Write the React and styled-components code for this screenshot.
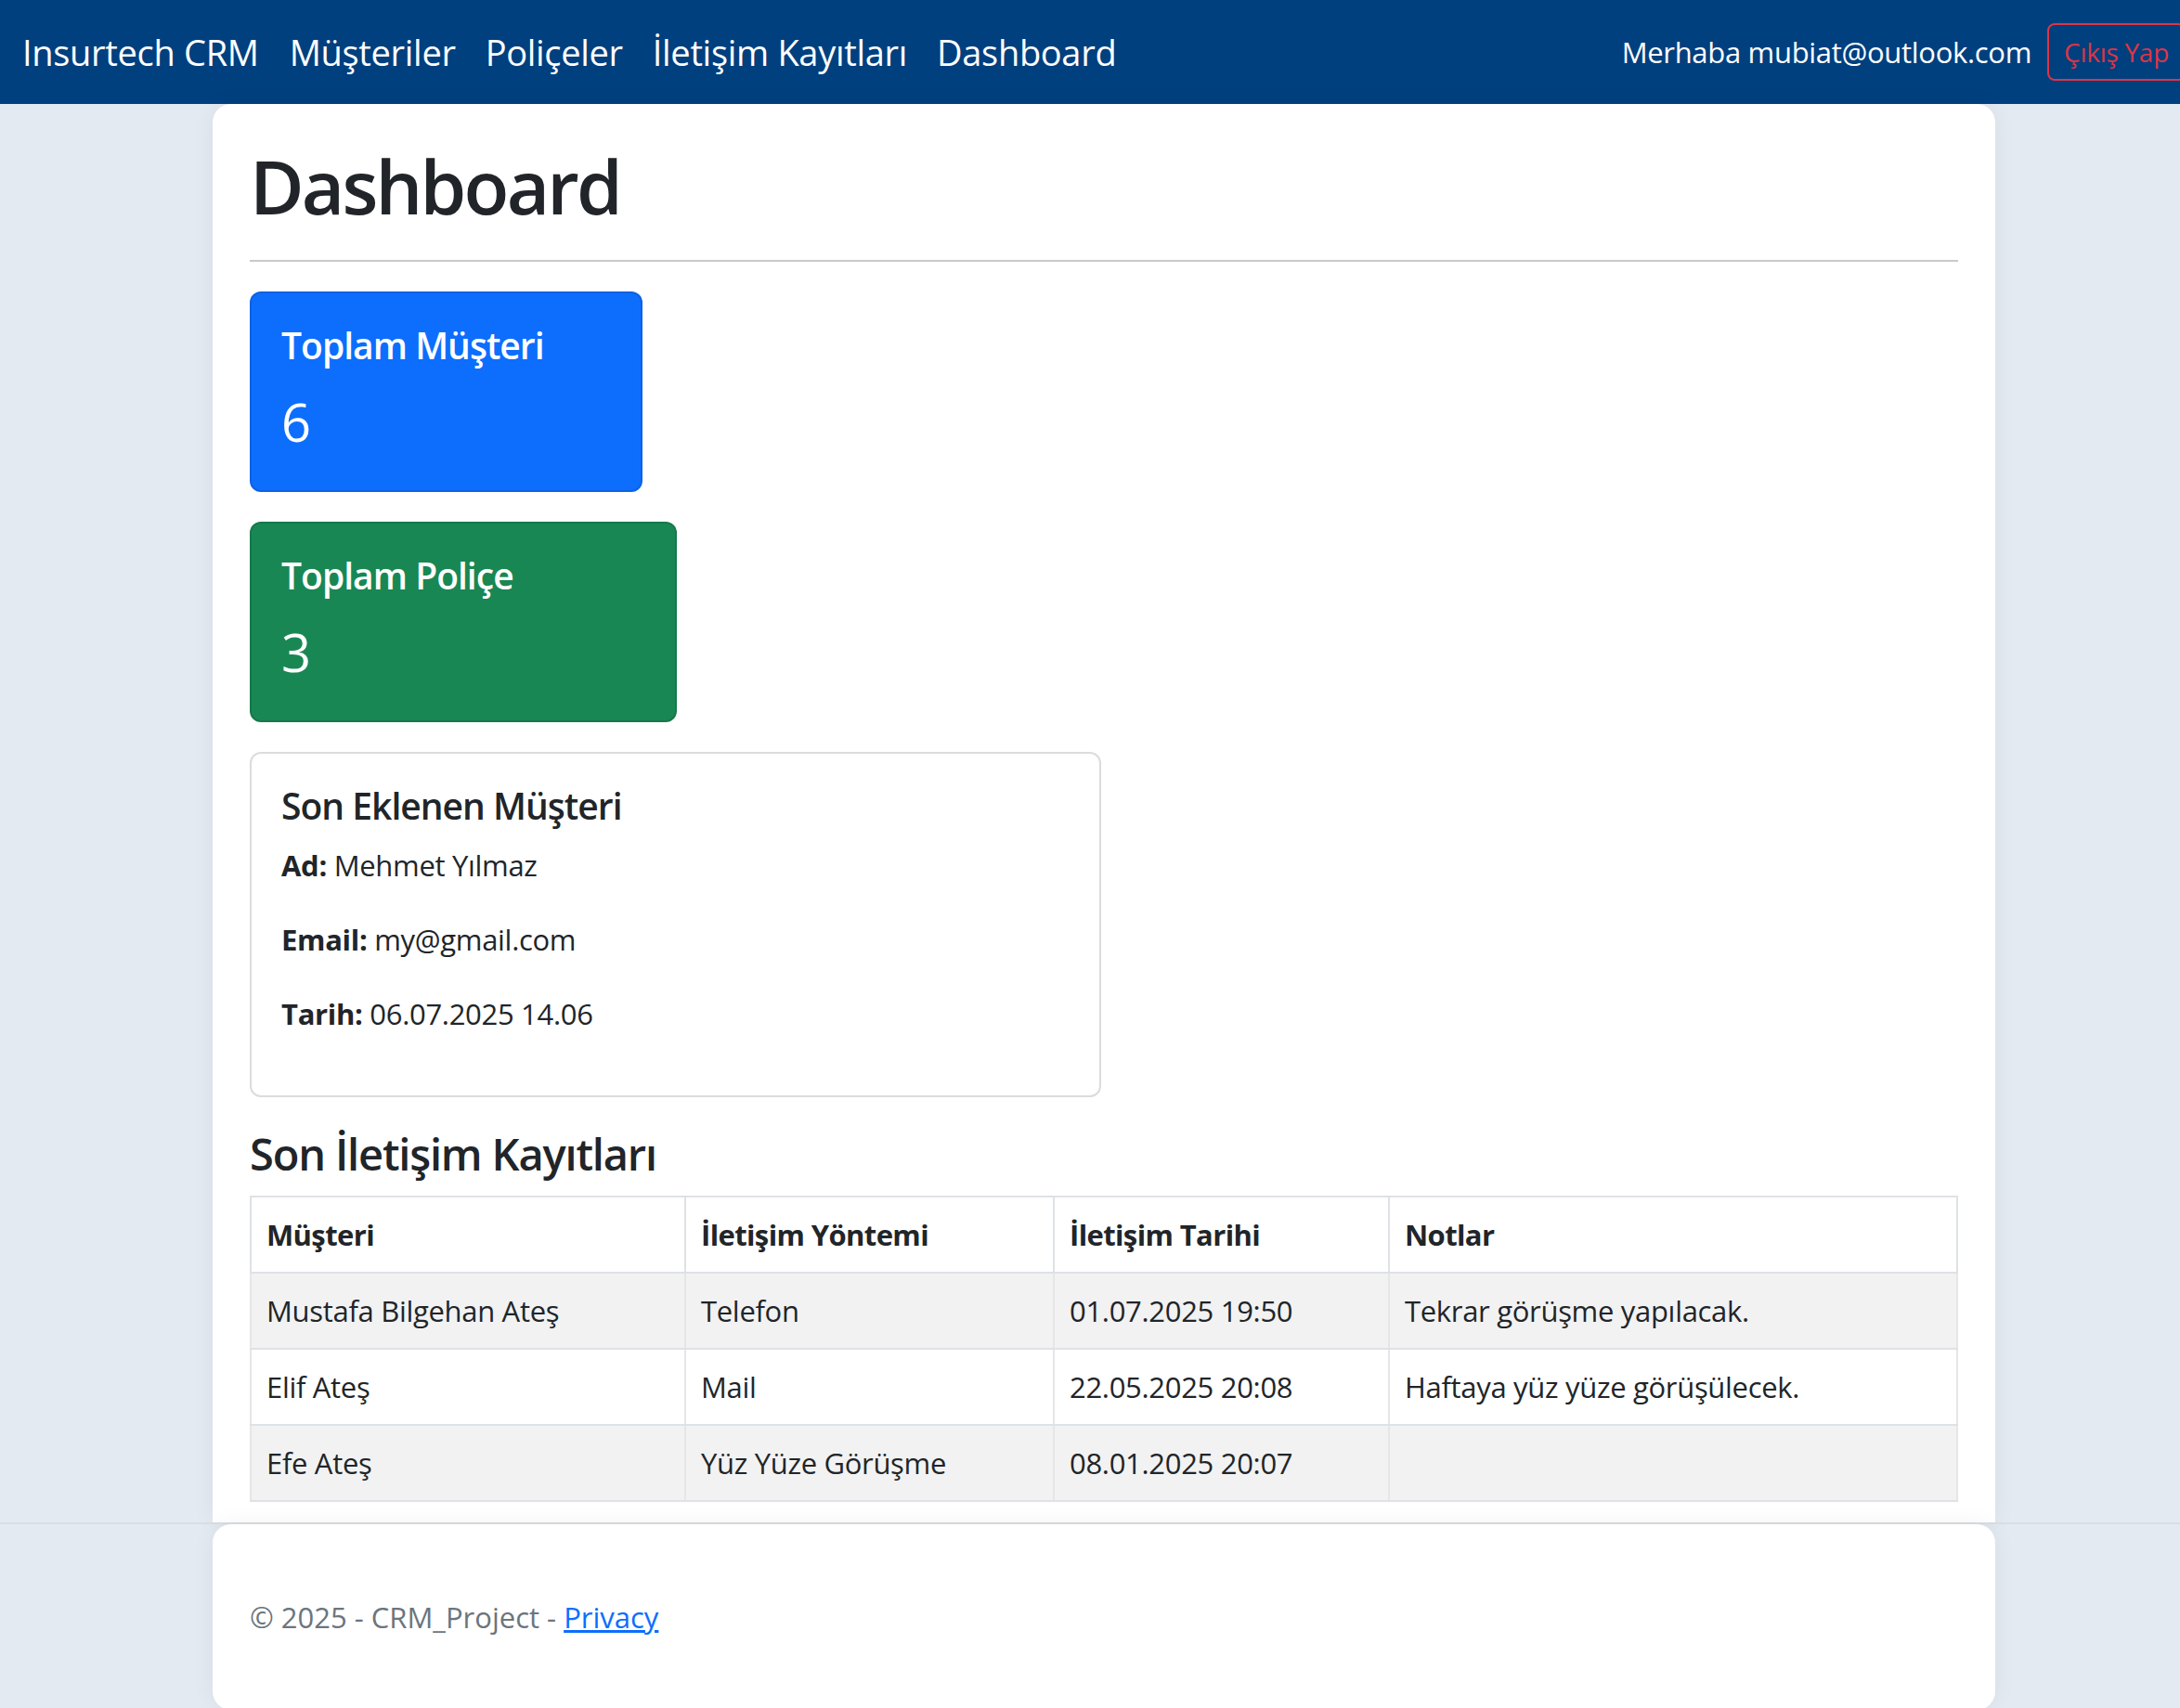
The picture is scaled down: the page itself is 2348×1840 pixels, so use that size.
import React from "react";
import styled, { createGlobalStyle } from "styled-components";

const font = `"Segoe UI", "Open Sans", "Noto Sans", Arial, sans-serif`;

const GlobalStyle = createGlobalStyle`
  html, body {
    margin: 0;
    padding: 0;
    overflow: hidden;
  }
  body {
    background-color: #e4eaf1;
    font-family: ${font};
    font-size: 31px;
    line-height: 48px;
    letter-spacing: -0.01em;
    color: #212529;
  }
  * {
    box-sizing: border-box;
  }
`;

const Navbar = styled.nav`
  display: flex;
  align-items: center;
  justify-content: space-between;
  height: 112px;
  padding-left: 24px;
  background-color: #00407f;
  color: #fff;
`;

const NavLeft = styled.div`
  display: flex;
  align-items: center;
`;

const Brand = styled.a`
  font-size: 38px;
  line-height: 60px;
  margin-right: 17px;
  color: #fff;
  text-decoration: none;
`;

const NavLink = styled.a`
  font-size: 38px;
  line-height: 60px;
  padding: 0 16px;
  color: #fff;
  text-decoration: none;
`;

const NavRight = styled.div`
  display: flex;
  align-items: center;
  gap: 17px;
  margin-right: -6px;
  white-space: nowrap;
`;

const Greeting = styled.span`
  font-size: 31px;
  color: #fff;
`;

const LogoutButton = styled.button`
  font-family: ${font};
  font-size: 28px;
  line-height: 42px;
  letter-spacing: -0.01em;
  padding: 8px 16px;
  color: #dc3545;
  background: transparent;
  border: 2px solid #dc3545;
  border-radius: 8px;
`;

const MainCard = styled.main`
  width: 1920px;
  margin-left: 229px;
  padding: 40px 40px 22px;
  background-color: #fff;
  border-radius: 20px 20px 0 0;
  box-shadow: 0 0 24px rgba(0, 0, 0, 0.06);
`;

const PageTitle = styled.h1`
  margin: 0 0 32px;
  font-size: 80px;
  font-weight: 600;
  line-height: 96px;
  letter-spacing: -0.035em;
`;

const Divider = styled.hr`
  margin: 0 0 32px;
  border: 0;
  height: 2px;
  background-color: #c8c9ca;
`;

const StatCard = styled.div`
  width: ${(p) => p.$width}px;
  margin-bottom: 32px;
  padding: 32px;
  background-color: ${(p) => p.$bg};
  border: 2px solid rgba(0, 0, 0, 0.1);
  border-radius: 12px;
  color: #fff;
`;

const StatTitle = styled.h5`
  margin: 0 0 16px;
  font-size: 39px;
  font-weight: 600;
  line-height: 48px;
  letter-spacing: -0.025em;
`;

const StatValue = styled.p`
  margin: 0;
  font-size: 56px;
  line-height: 84px;
`;

const InfoCard = styled.div`
  width: 917px;
  padding: 32px;
  border: 2px solid #dcdcdc;
  border-radius: 12px;
`;

const InfoTitle = styled.h5`
  margin: 0 0 16px;
  font-size: 39px;
  font-weight: 600;
  line-height: 48px;
  letter-spacing: -0.025em;
`;

const InfoLine = styled.p`
  margin: 0 0 32px;
  strong {
    font-weight: 700;
  }
`;

const SectionTitle = styled.h4`
  margin: 32px 0 16px;
  font-size: 47px;
  font-weight: 600;
  line-height: 58px;
  letter-spacing: -0.025em;
`;

const Table = styled.table`
  width: 100%;
  border-collapse: collapse;
  border: 2px solid #dee2e6;
`;

const Th = styled.th`
  width: ${(p) => (p.$width ? `${p.$width}px` : "auto")};
  padding: 16px;
  text-align: left;
  font-weight: 700;
  letter-spacing: -0.02em;
  border: 2px solid #dee2e6;
`;

const Row = styled.tr`
  background-color: ${(p) => (p.$striped ? "#f2f2f2" : "#fff")};
`;

const Td = styled.td`
  padding: 16px;
  height: 82px;
  border: 2px solid #dee2e6;
  border-left-color: #e6e6e6;
  border-right-color: #e6e6e6;
`;

const Footer = styled.footer`
  border-top: 2px solid #d9dee3;
`;

const FooterCard = styled.div`
  width: 1920px;
  margin-left: 229px;
  padding: 40px;
  background-color: #fff;
  border-radius: 20px;
  box-shadow: 0 0 24px rgba(0, 0, 0, 0.06);
  line-height: 120px;
  letter-spacing: 0;
  white-space: nowrap;
  color: #6c757d;
`;

const FooterLink = styled.a`
  color: #0d6efd;
  text-decoration: underline;
`;

const contacts = [
  { name: "Mustafa Bilgehan Ateş", method: "Telefon", date: "01.07.2025 19:50", note: "Tekrar görüşme yapılacak." },
  { name: "Elif Ateş", method: "Mail", date: "22.05.2025 20:08", note: "Haftaya yüz yüze görüşülecek." },
  { name: "Efe Ateş", method: "Yüz Yüze Görüşme", date: "08.01.2025 20:07", note: "" },
];

const App = () => {
  return (
    <>
      <GlobalStyle />
      <Navbar>
        <NavLeft>
          <Brand href="#">Insurtech CRM</Brand>
          <NavLink href="#">Müşteriler</NavLink>
          <NavLink href="#">Poliçeler</NavLink>
          <NavLink href="#">İletişim Kayıtları</NavLink>
          <NavLink href="#">Dashboard</NavLink>
        </NavLeft>
        <NavRight>
          <Greeting>Merhaba mubiat@outlook.com</Greeting>
          <LogoutButton>Çıkış Yap</LogoutButton>
        </NavRight>
      </Navbar>

      <MainCard>
        <PageTitle>Dashboard</PageTitle>
        <Divider />

        <StatCard $width={423} $bg="#0d6efd">
          <StatTitle>Toplam Müşteri</StatTitle>
          <StatValue>6</StatValue>
        </StatCard>
        <StatCard $width={460} $bg="#198754">
          <StatTitle>Toplam Poliçe</StatTitle>
          <StatValue>3</StatValue>
        </StatCard>

        <InfoCard>
          <InfoTitle>Son Eklenen Müşteri</InfoTitle>
          <InfoLine>
            <strong>Ad:</strong> Mehmet Yılmaz
          </InfoLine>
          <InfoLine>
            <strong>Email:</strong> my@gmail.com
          </InfoLine>
          <InfoLine>
            <strong>Tarih:</strong> 06.07.2025 14.06
          </InfoLine>
        </InfoCard>

        <SectionTitle>Son İletişim Kayıtları</SectionTitle>
        <Table>
          <thead>
            <tr>
              <Th $width={468}>Müşteri</Th>
              <Th $width={397}>İletişim Yöntemi</Th>
              <Th $width={361}>İletişim Tarihi</Th>
              <Th>Notlar</Th>
            </tr>
          </thead>
          <tbody>
            {contacts.map((c, i) => (
              <Row key={c.name} $striped={i % 2 === 0}>
                <Td>{c.name}</Td>
                <Td>{c.method}</Td>
                <Td>{c.date}</Td>
                <Td>{c.note}</Td>
              </Row>
            ))}
          </tbody>
        </Table>
      </MainCard>

      <Footer>
        <FooterCard>
          © 2025 - CRM_Project - <FooterLink href="#">Privacy</FooterLink>
        </FooterCard>
      </Footer>
    </>
  );
};

export default App;
